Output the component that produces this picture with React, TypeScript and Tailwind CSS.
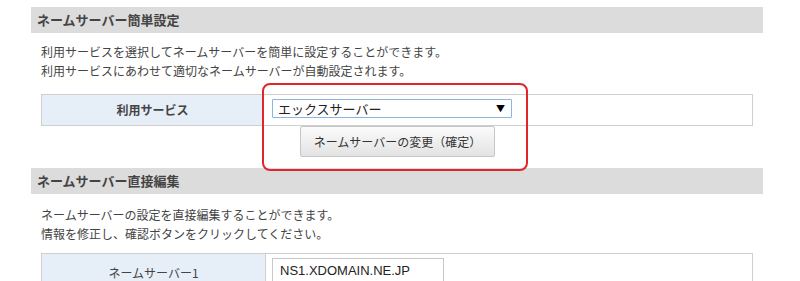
import React from "react";

const jp = { fontFamily: '"Noto Sans CJK JP", "Noto Sans", sans-serif' };

export default function App() {
  return (
    <div className="w-[800px] h-[281px] overflow-hidden bg-white relative text-[#333]" style={jp}>
      <div className="pt-[7px] pl-[31px] w-[763px]">
        <div className="h-[26px] bg-[#dcdcdc] flex items-center pl-[6px] text-[13px] font-bold text-[#444]">
          ネームサーバー簡単設定
        </div>
        <div className="mt-[9px] pl-[10px] text-[12px] leading-[19px] text-[#444]">
          <p>利用サービスを選択してネームサーバーを簡単に設定することができます。</p>
          <p>利用サービスにあわせて適切なネームサーバーが自動設定されます。</p>
        </div>
        <div className="mt-[14px] mx-[10px] border border-[#cfcfcf] flex h-[32px]">
          <div className="w-[222px] bg-[#e6eef8] border-r border-[#cfcfcf] flex items-center justify-center text-[12px] font-bold text-[#444]">
            利用サービス
          </div>
          <div className="flex-1 pl-[8px] pt-[4px]">
            <div className="w-[240px] h-[19px] border border-[#8db3e2] rounded-[1px] flex items-center justify-between pl-[5px] pr-[6px] text-[13px] text-[#222]">
              <span>エックスサーバー</span>
              <span className="text-[9px] text-black">▼</span>
            </div>
          </div>
        </div>
        <div className="ml-[269px] mt-[0px] w-[195px] h-[31px] border border-[#c6c6c6] bg-gradient-to-b from-[#fbfbfb] to-[#e3e3e3] flex items-center justify-center text-[12px] text-[#333] rounded-[2px]">
          ネームサーバーの変更（確定）
        </div>
        <div className="mt-[11px] h-[26px] bg-[#dcdcdc] flex items-center pl-[6px] text-[13px] font-bold text-[#444]">
          ネームサーバー直接編集
        </div>
        <div className="mt-[11px] pl-[10px] text-[12px] leading-[19px] text-[#444]">
          <p>ネームサーバーの設定を直接編集することができます。</p>
          <p>情報を修正し、確認ボタンをクリックしてください。</p>
        </div>
        <div className="mt-[10px] mx-[10px] border border-[#cfcfcf] flex h-[40px]">
          <div className="w-[224px] bg-[#e6eef8] border-r border-[#cfcfcf] flex items-center justify-center text-[12px] text-[#444]">
            ネームサーバー1
          </div>
          <div className="flex-1 pl-[6px] pt-[4px]">
            <div className="w-[172px] h-[26px] border border-[#c8c8c8] flex items-center pl-[7px] text-[13px] text-[#222]" style={{ fontFamily: '"Liberation Sans", Arial, sans-serif' }}>
              NS1.XDOMAIN.NE.JP
            </div>
          </div>
        </div>
      </div>
      <div className="absolute left-[262px] top-[83px] w-[266px] h-[88px] border-2 border-[#e0262b] rounded-[8px]" />
    </div>
  );
}
